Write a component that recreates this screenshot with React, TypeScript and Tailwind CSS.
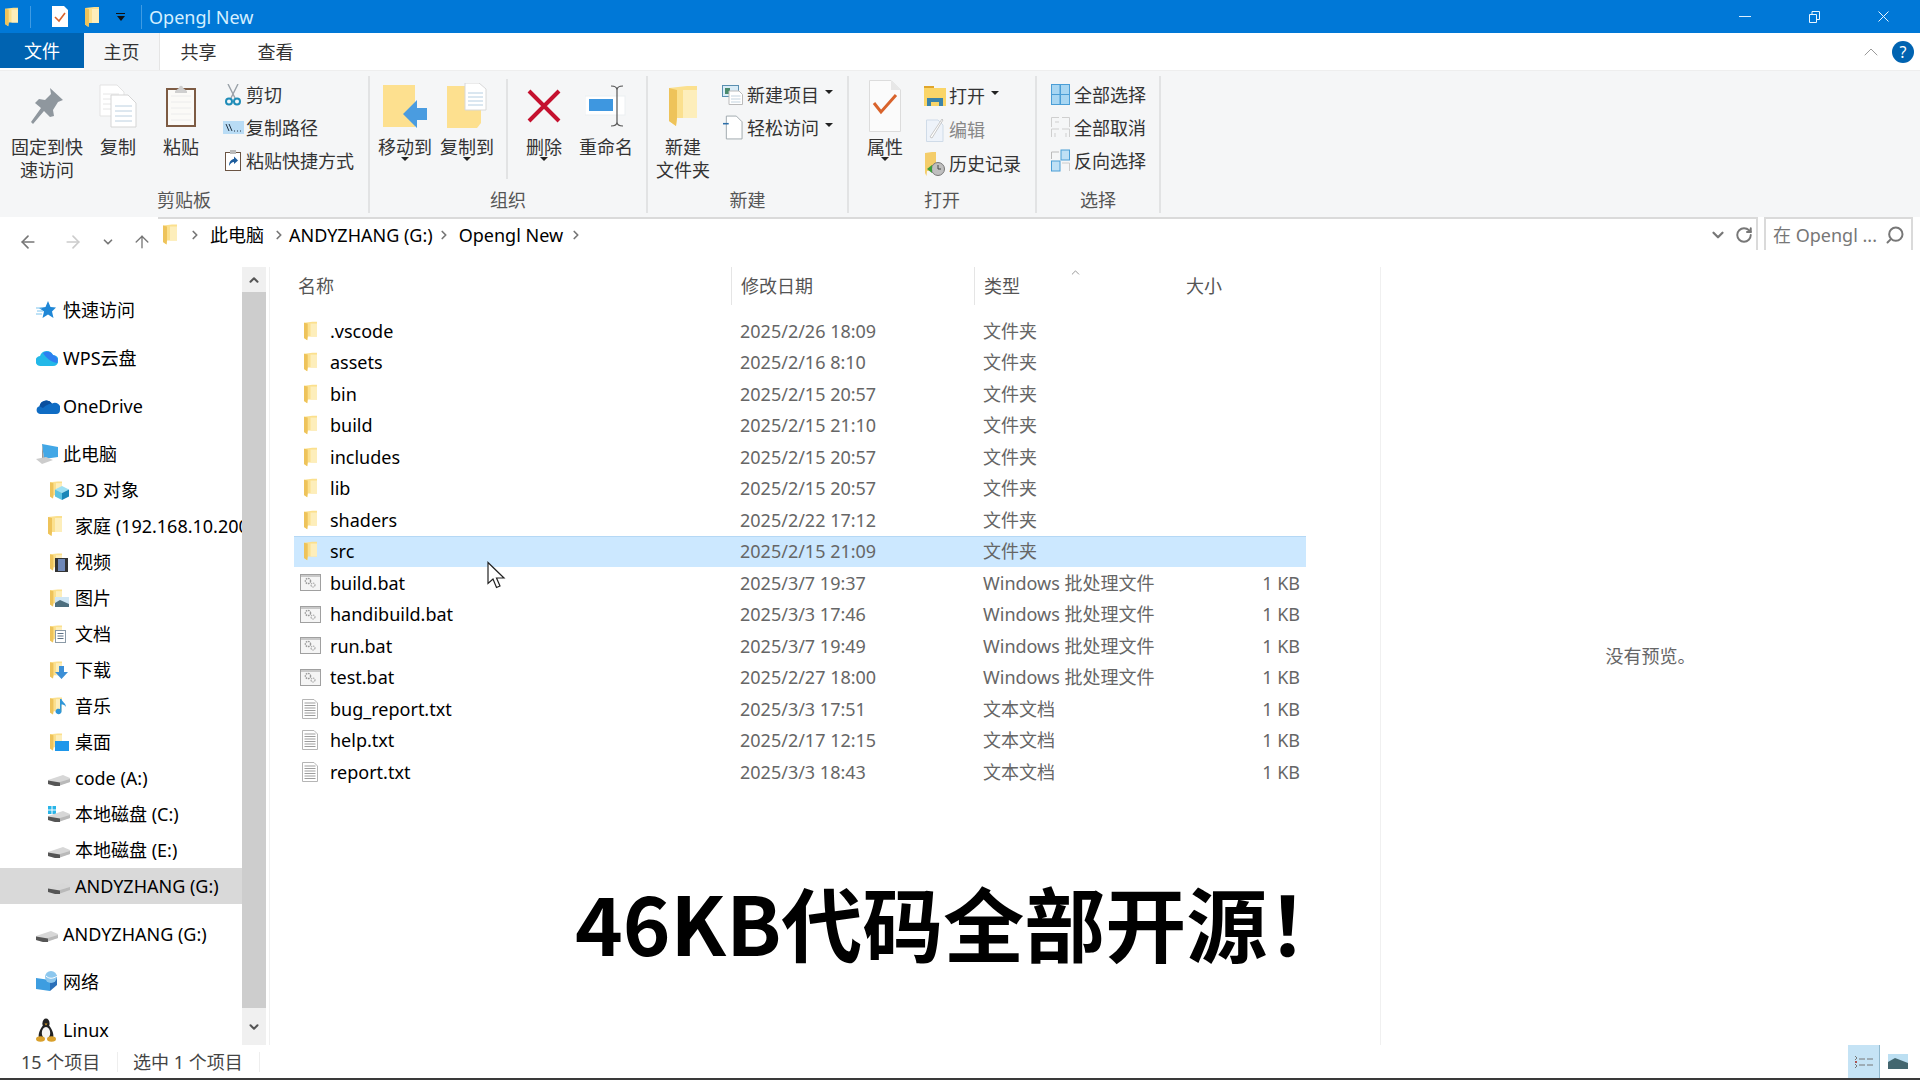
import type { ReactNode } from "react";
import { ArrowLeft, ArrowRight, ArrowUp, ChevronDown, ChevronRight, ChevronUp, RotateCw, Search } from "lucide-react";

function Folder({ className = "w-[13px] h-[20px]" }: { className?: string }) {
  return (
    <svg viewBox="0 0 14 20" className={className}>
      <path d="M0 1 L9 0 H14 V16 H4 L3.5 20 L0 17.5 Z" fill="#fbe08e" />
      <path d="M7 2 H14 V16 H7 Z" fill="#fdeebb" />
      <path d="M0 1 L4 2 V16 L3.5 20 L0 17.5 Z" fill="#eec35a" />
    </svg>
  );
}

function BatIcon() {
  return (
    <svg viewBox="0 0 21 17" className="w-[21px] h-[17px]">
      <rect x="0.5" y="0.5" width="20" height="16" fill="#f5f5f5" stroke="#a0a0a0" />
      <rect x="1" y="1" width="19" height="2" fill="#c9c9c9" />
      <circle cx="8" cy="7" r="2.6" fill="none" stroke="#999" strokeWidth="1.4" strokeDasharray="1.6 .8" />
      <circle cx="13" cy="11" r="2" fill="none" stroke="#aaa" strokeWidth="1.2" strokeDasharray="1.4 .7" />
    </svg>
  );
}

function TxtIcon() {
  return (
    <svg viewBox="0 0 16 20" className="w-[16px] h-[20px]">
      <path d="M.5.5 H12 L15.5 4 V19.5 H.5 Z" fill="#fff" stroke="#b5b5b5" />
      {[4, 6.5, 9, 11.5, 14, 16.5].map((y) => (
        <path key={y} d={`M2.5 ${y} H13.5`} stroke="#9d9d9d" />
      ))}
    </svg>
  );
}

function Drive({ win = false }: { win?: boolean }) {
  return (
    <svg viewBox="0 0 22 16" className="w-[22px] h-[16px]">
      {win && (
        <g fill="#28b4e8">
          <rect x="0" y="0" width="3.5" height="3.5" />
          <rect x="4.5" y="0" width="3.5" height="3.5" />
          <rect x="0" y="4.5" width="3.5" height="3.5" />
          <rect x="4.5" y="4.5" width="3.5" height="3.5" />
        </g>
      )}
      <path d="M0 10 L15 5 L22 8 V12 L7 16 L0 14 Z" fill="#d7d7d7" />
      <path d="M0 10.5 L12 12.5 V16 H7 L0 14 Z" fill="#555" />
      <path d="M12 12 L22 9 V12 L12 15.5 Z" fill="#b9b9b9" />
    </svg>
  );
}

function FolderWith({ children }: { children: ReactNode }) {
  return (
    <span className="relative block w-[22px] h-[20px]">
      <span className="absolute left-[2px] top-0">
        <Folder className="w-[12px] h-[20px]" />
      </span>
      <span className="absolute left-[7px] top-[6px]">{children}</span>
    </span>
  );
}

const folderOverlay = {
  cube: (
    <svg viewBox="0 0 14 14" className="w-[14px] h-[14px]">
      <path d="M7 0 L14 3.5 L7 7 L0 3.5 Z" fill="#9fe0f2" />
      <path d="M0 3.5 L7 7 V14 L0 10.5 Z" fill="#5cc3e2" />
      <path d="M14 3.5 L7 7 V14 L14 10.5 Z" fill="#1b87b8" />
    </svg>
  ),
  film: (
    <svg viewBox="0 0 13 14" className="w-[13px] h-[14px]">
      <rect width="13" height="14" fill="#333" />
      <rect x="3" y="1" width="7" height="12" fill="#6f88b8" />
    </svg>
  ),
  pic: (
    <svg viewBox="0 0 14 10" className="w-[14px] h-[10px] mt-[3px]">
      <rect width="14" height="10" fill="#cfe6f5" />
      <path d="M0 6 L5 3 L14 7 V10 H0 Z" fill="#4d6f7f" />
    </svg>
  ),
  doc: (
    <svg viewBox="0 0 11 13" className="w-[11px] h-[13px]">
      <rect x=".5" y=".5" width="10" height="12" fill="#fff" stroke="#8b9aa7" />
      <path d="M2.5 3.5 H8.5 M2.5 6 H8.5 M2.5 8.5 H8.5" stroke="#5e7286" />
    </svg>
  ),
  down: (
    <svg viewBox="0 0 13 13" className="w-[13px] h-[13px]">
      <path d="M4 0 H9 V6 H13 L6.5 13 L0 6 H4 Z" fill="#3c8fd6" />
    </svg>
  ),
  music: (
    <svg viewBox="0 0 12 16" className="w-[12px] h-[16px] -mt-[3px]">
      <path d="M5 0 H6.5 C7 3 11 4 11 8 C10 6 8 5.5 6.5 5.5 V12 A3 2.8 0 1 1 5 10 Z" fill="#2f96d8" />
    </svg>
  ),
  desk: (
    <svg viewBox="0 0 14 10" className="w-[14px] h-[10px] mt-[3px]">
      <rect width="14" height="10" fill="#1e97ea" />
    </svg>
  ),
};

function Star() {
  return (
    <svg viewBox="0 0 20 18" className="w-[20px] h-[18px]">
      <path d="M12 0 L14.5 6 L20 6.5 L16 10.5 L17.5 17 L12 13.5 L6.5 17 L8 10.5 L3 7 L9.5 6 Z" fill="#1f87d6" />
      <path d="M0 7 H6 M1 10 H7 M0 13 H6" stroke="#7cc4ee" strokeWidth="1" />
    </svg>
  );
}

function WpsCloud() {
  return (
    <svg viewBox="0 0 22 18" className="w-[22px] h-[18px]">
      <path d="M5 17 A5 5 0 0 1 4 7 A7 7 0 0 1 17 6 A5.5 5.5 0 0 1 17 17 Z" fill="#23b8e8" />
      <path d="M7 4 A7 7 0 0 1 17 6 A5.5 5.5 0 0 1 21 14 C15 13 10 9 7 4 Z" fill="#2e7ff0" />
    </svg>
  );
}

function OneDrive() {
  return (
    <svg viewBox="0 0 24 15" className="w-[24px] h-[15px]">
      <path d="M4 15 A4 4 0 0 1 3.5 7.2 A7 7 0 0 1 16 4.5 A5.5 5.5 0 0 1 24 11 A4 4 0 0 1 20 15 Z" fill="#0f6cc4" />
      <path d="M3.5 7.2 A7 7 0 0 1 16 4.5 C11 5 8 8 7 9 Z" fill="#0a4f9e" />
    </svg>
  );
}

function Pc() {
  return (
    <svg viewBox="0 0 24 20" className="w-[24px] h-[20px]">
      <path d="M6 0 L22 3 V13 L8 15 Z" fill="#42a7e6" />
      <path d="M6 0 L8 15 L6 14 Z" fill="#9a9a9a" />
      <path d="M0 15 L10 13 L17 16 L6 20 Z" fill="#ccc" />
    </svg>
  );
}

function Net() {
  return (
    <svg viewBox="0 0 22 22" className="w-[22px] h-[22px]">
      <path d="M0 7 L14 9 V20 L0 18 Z" fill="#3d9de0" />
      <path d="M14 9 L21 4 V14 L14 20 Z" fill="#2a6fb8" />
      <circle cx="15" cy="6" r="6" fill="#8cc7ee" />
      <path d="M10 5 C13 8 17 8 21 5" stroke="#fff" fill="none" />
    </svg>
  );
}

function Tux() {
  return (
    <svg viewBox="0 0 20 24" className="w-[20px] h-[24px]">
      <ellipse cx="10" cy="5.5" rx="3.6" ry="5" fill="#222" />
      <path d="M6.5 8 C3 13 2 17 3 20 H17 C18 17 17 13 13.5 8 Z" fill="#222" />
      <ellipse cx="10" cy="15" rx="4.2" ry="6" fill="#f6f6f6" />
      <path d="M8.5 5.5 H11.5 L10 7.5 Z" fill="#dda02c" />
      <ellipse cx="4.5" cy="21" rx="4.5" ry="2.8" fill="#d9a02c" />
      <ellipse cx="15.5" cy="21" rx="4.5" ry="2.8" fill="#d9a02c" />
    </svg>
  );
}

const pinIcon = (
  <svg viewBox="0 0 32 36" className="w-[32px] h-[36px]">
    <path d="M19 0 L32 12 L27 14 L22 22 L23 28 L19 29 L13 23 L2 36 L0 34 L10 20 L4 15 L8 11 L14 12 L20 6 Z" fill="#8f979e" />
  </svg>
);
const copyIcon = (
  <svg viewBox="0 0 38 44" className="w-[38px] h-[44px]">
    <path d="M1 1 H18 L25 8 V32 H1 Z" fill="#fff" stroke="#e3e3e3" />
    <path d="M4 10 H20 M4 15 H20 M4 20 H20 M4 25 H20" stroke="#e6e6e6" />
    <path d="M12 11 H29 L37 19 V43 H12 Z" fill="#fff" stroke="#d5d5d5" />
    <path d="M16 22 H33 M16 27 H33 M16 32 H33 M16 37 H33" stroke="#bcd0e0" />
  </svg>
);
const pasteIcon = (
  <svg viewBox="0 0 32 44" className="w-[32px] h-[44px]">
    <rect x="1" y="4" width="30" height="39" fill="#7d5b43" />
    <rect x="3" y="6" width="26" height="35" fill="#fbfaf7" />
    <path d="M6 12 H26 M6 18 H26 M6 24 H26 M6 30 H26 M6 36 H26" stroke="#ececec" />
    <path d="M10 7 L14 4 C14 1 18 1 18 4 L22 7 V9 H10 Z" fill="#cfcfcf" />
  </svg>
);
const cutIcon = (
  <svg viewBox="0 0 16 22" className="w-[16px] h-[22px]">
    <path d="M3 0 L10 14 M13 0 L6 14" stroke="#9aa1a8" strokeWidth="1.4" />
    <circle cx="4" cy="17.5" r="3" fill="none" stroke="#1f8cb8" strokeWidth="2" />
    <circle cx="12" cy="17.5" r="3" fill="none" stroke="#1f8cb8" strokeWidth="2" />
  </svg>
);
const pathIcon = (
  <svg viewBox="0 0 21 13" className="w-[21px] h-[13px]">
    <rect width="21" height="13" fill="#b9dcf5" />
    <path d="M3 3 L6 10 M6 3 L9 10" stroke="#234" strokeWidth="1" />
    <path d="M11 10 H12 M14 10 H15 M17 10 H18" stroke="#234" strokeWidth="1" />
  </svg>
);
const shortcutIcon = (
  <svg viewBox="0 0 16 21" className="w-[16px] h-[21px]">
    <rect x=".5" y="2.5" width="15" height="18" fill="#fff" stroke="#6b5443" />
    <rect x="5" y="0" width="6" height="4" fill="#bbb" />
    <path d="M4 16 C4 11 7 9 9 9 V6.5 L13 10.5 L9 14 V12 C7 12 5.5 13.5 4 16 Z" fill="#1d5c9c" />
  </svg>
);
const moveIcon = (
  <svg viewBox="0 0 44 44" className="w-[44px] h-[44px]">
    <rect x="0" y="1" width="32" height="42" fill="#fde08f" />
    <path d="M20 30 L34 16 V24 H44 V36 H34 V44 Z" fill="#4a9ce0" />
  </svg>
);
const copyToIcon = (
  <svg viewBox="0 0 40 46" className="w-[40px] h-[46px]">
    <path d="M0 3 H34 V40 L30 45 H0 Z" fill="#fde08f" />
    <path d="M18 0 H32 L39 6 V27 H18 Z" fill="#fff" stroke="#d8d8d8" />
    <path d="M21 10 H36 M21 14 H36 M21 18 H36 M21 22 H36" stroke="#b6cfe2" />
  </svg>
);
const deleteIcon = (
  <svg viewBox="0 0 34 34" className="w-[34px] h-[34px]">
    <path d="M2 2 L32 32 M32 2 L2 32" stroke="#c5112f" strokeWidth="4" />
  </svg>
);
const renameIcon = (
  <svg viewBox="0 0 42 42" className="w-[42px] h-[42px]">
    <rect x="0" y="11" width="40" height="19" fill="#fff" stroke="#eceff2" />
    <rect x="4" y="14" width="24" height="12" fill="#3e97e0" />
    <path d="M26 1 C30 1 32 2 32 5 V37 C32 40 30 41 26 41 M38 1 C34 1 32 2 32 5 M32 37 C32 40 34 41 38 41" stroke="#555" fill="none" strokeWidth="1.2" />
  </svg>
);
const newItemIcon = (
  <svg viewBox="0 0 21 20" className="w-[21px] h-[20px]">
    <rect x=".5" y=".5" width="16" height="11" fill="#d9ecf7" stroke="#5a8fb0" />
    <rect x="3" y="3" width="5" height="6" fill="#4a8a6c" />
    <path d="M7 6 H17 L20.5 9.5 V19.5 H7 Z" fill="#fff" stroke="#bbb" />
    <path d="M9 11 H18.5 M9 14 H18.5 M9 17 H18.5" stroke="#c3d3df" />
  </svg>
);
const easyIcon = (
  <svg viewBox="0 0 21 26" className="w-[20px] h-[25px]">
    <path d="M3.5 1 H14 L20 7 V25 H3.5 Z" fill="#fff" stroke="#9ea6ac" />
    <path d="M0 9 H6" stroke="#2b6ea8" strokeWidth="1.6" />
  </svg>
);
const newFolderIcon = <Folder className="w-[28px] h-[48px]" />;
const propsIcon = (
  <svg viewBox="0 0 32 52" className="w-[32px] h-[52px]">
    <path d="M.5 .5 H22 L31.5 10 V51.5 H.5 Z" fill="#fbfbfb" stroke="#dcdcdc" />
    <path d="M22 .5 V10 H31.5 Z" fill="#e7e7e7" />
    <path d="M5 23 L12 32 L27 15" stroke="#d9632c" strokeWidth="3" fill="none" />
  </svg>
);
const openIcon = (
  <svg viewBox="0 0 22 20" className="w-[22px] h-[20px]">
    <rect y="0" width="10" height="3" fill="#e0a52a" />
    <rect y="2" width="22" height="18" fill="#fad568" />
    <path d="M3 20 V12 H19 V20 H15 V16 H7 V20 Z" fill="#3c83a8" />
  </svg>
);
const editIcon = (
  <svg viewBox="0 0 18 24" className="w-[18px] h-[24px]">
    <path d="M.5 2 H12 L17 7 V23.5 H.5 Z" fill="#eef3fa" stroke="#cfdbe8" />
    <path d="M4 19 L16 1 L17 2 L6 20 Z" fill="#fff" stroke="#c8c8c8" />
  </svg>
);
const historyIcon = (
  <svg viewBox="0 0 20 24" className="w-[20px] h-[24px]">
    <path d="M0 1 L7 0 H11 V19 H2 L1.5 24 L0 21 Z" fill="#f4cd6a" />
    <circle cx="13" cy="17" r="6.5" fill="#bfbfbf" stroke="#777" />
    <path d="M13 13 V17 H16" stroke="#444" fill="none" />
    <path d="M2 17 L7 13 V21 Z" fill="#3d9c3a" />
  </svg>
);
const selectAllIcon = (
  <svg viewBox="0 0 19 21" className="w-[19px] h-[21px]">
    <rect width="19" height="21" fill="#4b9ed6" />
    <rect x="1" y="1" width="7.5" height="9" fill="#a8d6f2" />
    <rect x="10" y="1" width="8" height="9" fill="#a8d6f2" />
    <rect x="1" y="11" width="7.5" height="9" fill="#a8d6f2" />
    <rect x="10" y="11" width="8" height="9" fill="#a8d6f2" />
  </svg>
);
const selectNoneIcon = (
  <svg viewBox="0 0 19 21" className="w-[19px] h-[21px]" fill="none" stroke="#cfcfcf">
    <path d="M.5 10 V.5 H8 M11 .5 H18.5 V10 M.5 20 V12 H8 M11 12 H18.5 V20 M4 5 H8 M4 16 V20 M15 16 V20" />
  </svg>
);
const invertIcon = (
  <svg viewBox="0 0 19 23" className="w-[19px] h-[23px]">
    <path d="M.5 10 V3 H8" stroke="#bbb" fill="none" />
    <rect x="10" y="1" width="8.5" height="10" fill="#bfe0f5" stroke="#4b9ed6" />
    <rect x=".5" y="12" width="8.5" height="10" fill="#bfe0f5" stroke="#4b9ed6" />
    <path d="M11 14 H18.5 V22" stroke="#ccc" fill="none" />
  </svg>
);

function Caret({ className = "" }: { className?: string }) {
  return <span className={`block w-0 h-0 border-x-[4px] border-x-transparent border-t-[4px] border-t-[#222] ${className}`} />;
}

function BigButton({ w, icon, lines, menu }: { w: string; icon: ReactNode; lines: string[]; menu?: boolean }) {
  return (
    <div className={`${w} shrink-0 flex flex-col items-center`}>
      <div className="h-[60px] flex items-center justify-center">{icon}</div>
      {lines.map((l) => (
        <div key={l} className="h-[23px] leading-[23px] text-[18px] text-[#333] whitespace-nowrap">
          {l}
        </div>
      ))}
      {menu && <Caret className="-mt-[2px]" />}
    </div>
  );
}

function SmallRow({ icon, label, iconW, h = "h-[33px]", muted, menu }: { icon: ReactNode; label: string; iconW: string; h?: string; muted?: boolean; menu?: boolean }) {
  return (
    <div className={`${h} flex items-center`}>
      <div className={`${iconW} shrink-0 flex justify-center`}>{icon}</div>
      <span className={`text-[18px] whitespace-nowrap ${muted ? "text-[#888]" : "text-[#333]"}`}>{label}</span>
      {menu && <Caret className="ml-[6px] mb-[6px]" />}
    </div>
  );
}

function Group({ w, label, children }: { w: string; label: string; children: ReactNode }) {
  return (
    <div className={`${w} shrink-0 h-[137px] mt-[5px] border-r-[2px] border-[#e2e3e4] flex flex-col`}>
      <div className="h-[112px] flex">{children}</div>
      <div className="h-[25px] leading-[25px] text-center text-[18px] text-[#555]">{label}</div>
    </div>
  );
}

const navRows: { label: string; icon: ReactNode; top?: boolean; selected?: boolean }[] = [
  { label: "快速访问", icon: <Star />, top: true },
  { label: "WPS云盘", icon: <WpsCloud />, top: true },
  { label: "OneDrive", icon: <OneDrive />, top: true },
  { label: "此电脑", icon: <Pc />, top: true },
  { label: "3D 对象", icon: <FolderWith>{folderOverlay.cube}</FolderWith> },
  { label: "家庭 (192.168.10.200)", icon: <Folder className="w-[14px] h-[24px]" /> },
  { label: "视频", icon: <FolderWith>{folderOverlay.film}</FolderWith> },
  { label: "图片", icon: <FolderWith>{folderOverlay.pic}</FolderWith> },
  { label: "文档", icon: <FolderWith>{folderOverlay.doc}</FolderWith> },
  { label: "下载", icon: <FolderWith>{folderOverlay.down}</FolderWith> },
  { label: "音乐", icon: <FolderWith>{folderOverlay.music}</FolderWith> },
  { label: "桌面", icon: <FolderWith>{folderOverlay.desk}</FolderWith> },
  { label: "code (A:)", icon: <Drive /> },
  { label: "本地磁盘 (C:)", icon: <Drive win /> },
  { label: "本地磁盘 (E:)", icon: <Drive /> },
  { label: "ANDYZHANG (G:)", icon: <Drive />, selected: true },
  { label: "ANDYZHANG (G:)", icon: <Drive />, top: true },
  { label: "网络", icon: <Net />, top: true },
  { label: "Linux", icon: <Tux />, top: true },
];

const files = [
  { name: ".vscode", date: "2025/2/26 18:09", type: "文件夹", size: "", kind: "dir" },
  { name: "assets", date: "2025/2/16 8:10", type: "文件夹", size: "", kind: "dir" },
  { name: "bin", date: "2025/2/15 20:57", type: "文件夹", size: "", kind: "dir" },
  { name: "build", date: "2025/2/15 21:10", type: "文件夹", size: "", kind: "dir" },
  { name: "includes", date: "2025/2/15 20:57", type: "文件夹", size: "", kind: "dir" },
  { name: "lib", date: "2025/2/15 20:57", type: "文件夹", size: "", kind: "dir" },
  { name: "shaders", date: "2025/2/22 17:12", type: "文件夹", size: "", kind: "dir" },
  { name: "src", date: "2025/2/15 21:09", type: "文件夹", size: "", kind: "dir" },
  { name: "build.bat", date: "2025/3/7 19:37", type: "Windows 批处理文件", size: "1 KB", kind: "bat" },
  { name: "handibuild.bat", date: "2025/3/3 17:46", type: "Windows 批处理文件", size: "1 KB", kind: "bat" },
  { name: "run.bat", date: "2025/3/7 19:49", type: "Windows 批处理文件", size: "1 KB", kind: "bat" },
  { name: "test.bat", date: "2025/2/27 18:00", type: "Windows 批处理文件", size: "1 KB", kind: "bat" },
  { name: "bug_report.txt", date: "2025/3/3 17:51", type: "文本文档", size: "1 KB", kind: "txt" },
  { name: "help.txt", date: "2025/2/17 12:15", type: "文本文档", size: "1 KB", kind: "txt" },
  { name: "report.txt", date: "2025/3/3 18:43", type: "文本文档", size: "1 KB", kind: "txt" },
];

export default function App() {
  return (
    <div className="relative w-[1920px] h-[1080px] overflow-hidden bg-white flex flex-col font-['Noto_Sans','Noto_Sans_CJK_SC',sans-serif] text-[18px] leading-none text-black">
      {/* title bar */}
      <div className="h-[33px] shrink-0 bg-[#0078d7] flex items-center">
        <div className="ml-[5px] w-[14px]">
          <Folder className="w-[13px] h-[20px]" />
        </div>
        <div className="ml-[11px] w-px h-[22px] bg-[#3f9be3]" />
        <svg viewBox="0 0 16 21" className="ml-[21px] w-[16px] h-[21px]">
          <path d="M0 0 H12 L16 4 V21 H0 Z" fill="#fff" />
          <path d="M3 11 L7 15 L13 7" stroke="#d9632c" strokeWidth="1.6" fill="none" />
        </svg>
        <div className="ml-[17px]">
          <Folder className="w-[14px] h-[22px]" />
        </div>
        <div className="ml-[17px] flex flex-col items-center gap-[2px]">
          <span className="block w-[9px] h-px bg-[#111]" />
          <span className="block w-0 h-0 border-x-[4px] border-x-transparent border-t-[5px] border-t-[#111]" />
        </div>
        <div className="ml-[16px] w-px h-[24px] bg-[#3f9be3]" />
        <span className="ml-[7px] text-[18px] text-[#d4efff]">Opengl New</span>
        <div className="ml-auto flex items-center">
          <span className="w-[12px] h-px bg-[#dcefff] mr-[58px]" />
          <svg viewBox="0 0 11 12" fill="none" stroke="#eaf6ff" className="w-[11px] h-[12px] mr-[58px]">
            <path d="M.5 3.5 H7.5 V11.5 H.5 Z M3 3 V.5 H10.5 V8.5 H8" />
          </svg>
          <svg viewBox="0 0 11 11" stroke="#eaf6ff" className="w-[11px] h-[11px] mr-[31px]">
            <path d="M.5 .5 L10.5 10.5 M10.5 .5 L.5 10.5" />
          </svg>
        </div>
      </div>

      {/* tabs */}
      <div className="h-[37px] shrink-0 flex items-start relative">
        <div className="w-[84px] h-[35px] bg-[#0063b1] text-white flex items-center justify-center">文件</div>
        <div className="w-[76px] h-[37px] bg-[#f5f6f7] border-r border-[#e5e5e5] text-[#333] flex items-center justify-center">主页</div>
        <div className="w-[77px] h-[37px] text-[#333] flex items-center justify-center">共享</div>
        <div className="w-[77px] h-[37px] text-[#333] flex items-center justify-center">查看</div>
        <div className="ml-auto flex items-center h-[37px]">
          <ChevronUp className="w-[24px] h-[24px] text-[#9a9a9a]" strokeWidth={1} />
          <div className="ml-[9px] mr-[6px] w-[22px] h-[22px] rounded-full bg-[#0063b1] text-white flex items-center justify-center text-[16px]">?</div>
        </div>
      </div>

      {/* ribbon */}
      <div className="h-[147px] shrink-0 bg-[#f5f6f7] flex border-t border-[#eee]">
        <Group w="w-[370px]" label="剪贴板">
          <BigButton w="w-[94px]" icon={pinIcon} lines={["固定到快", "速访问"]} />
          <BigButton w="w-[48px]" icon={copyIcon} lines={["复制"]} />
          <BigButton w="w-[78px]" icon={pasteIcon} lines={["粘贴"]} />
          <div className="flex flex-col pt-[2px]">
            <SmallRow icon={cutIcon} label="剪切" iconW="w-[26px]" />
            <SmallRow icon={pathIcon} label="复制路径" iconW="w-[26px]" />
            <SmallRow icon={shortcutIcon} label="粘贴快捷方式" iconW="w-[26px]" />
          </div>
        </Group>
        <Group w="w-[278px]" label="组织">
          <BigButton w="w-[70px]" icon={moveIcon} lines={["移动到"]} menu />
          <BigButton w="w-[54px]" icon={copyToIcon} lines={["复制到"]} menu />
          <div className="ml-[12px] w-[2px] h-[100px] mt-[3px] bg-[#e2e3e4]" />
          <BigButton w="w-[72px]" icon={deleteIcon} lines={["删除"]} menu />
          <BigButton w="w-[52px]" icon={renameIcon} lines={["重命名"]} />
        </Group>
        <Group w="w-[201px]" label="新建">
          <BigButton w="w-[70px]" icon={newFolderIcon} lines={["新建", "文件夹"]} />
          <div className="flex flex-col pt-[2px]">
            <SmallRow icon={newItemIcon} label="新建项目" iconW="w-[29px]" menu />
            <SmallRow icon={easyIcon} label="轻松访问" iconW="w-[29px]" menu />
          </div>
        </Group>
        <Group w="w-[188px]" label="打开">
          <BigButton w="w-[72px]" icon={propsIcon} lines={["属性"]} menu />
          <div className="flex flex-col pt-[2px]">
            <SmallRow icon={openIcon} label="打开" iconW="w-[28px]" h="h-[35px]" menu />
            <SmallRow icon={editIcon} label="编辑" iconW="w-[28px]" h="h-[34px]" muted />
            <SmallRow icon={historyIcon} label="历史记录" iconW="w-[28px]" h="h-[34px]" />
          </div>
        </Group>
        <Group w="w-[124px]" label="选择">
          <div className="flex flex-col pt-[2px] pl-[10px]">
            <SmallRow icon={selectAllIcon} label="全部选择" iconW="w-[27px]" />
            <SmallRow icon={selectNoneIcon} label="全部取消" iconW="w-[27px]" />
            <SmallRow icon={invertIcon} label="反向选择" iconW="w-[27px]" />
          </div>
        </Group>
      </div>

      {/* address row */}
      <div className="h-[50px] shrink-0 flex items-center">
        <div className="w-[158px] flex items-center shrink-0">
          <ArrowLeft className="ml-[18px] w-[20px] h-[20px] text-[#777]" strokeWidth={2} />
          <ArrowRight className="ml-[25px] w-[20px] h-[20px] text-[#ccc]" strokeWidth={2} />
          <ChevronDown className="ml-[18px] w-[14px] h-[14px] text-[#777]" strokeWidth={3} />
          <ArrowUp className="ml-[17px] w-[20px] h-[20px] text-[#777]" strokeWidth={1.6} />
        </div>
        <div className="w-[1600px] h-[33px] -mt-[17px] border-t-2 border-r-2 border-[#dadada] flex items-center">
          <span className="ml-[5px]">
            <Folder className="w-[14px] h-[21px]" />
          </span>
          <ChevronRight className="ml-[11px] w-[14px] h-[14px] text-[#777]" strokeWidth={3} />
          <span className="ml-[8px] text-black">此电脑</span>
          <ChevronRight className="ml-[8px] w-[14px] h-[14px] text-[#777]" strokeWidth={3} />
          <span className="ml-[3px] text-black">ANDYZHANG (G:)</span>
          <ChevronRight className="ml-[4px] w-[14px] h-[14px] text-[#777]" strokeWidth={3} />
          <span className="ml-[8px] text-black">Opengl New</span>
          <ChevronRight className="ml-[6px] w-[14px] h-[14px] text-[#777]" strokeWidth={3} />
          <ChevronDown className="ml-auto w-[18px] h-[18px] text-[#777]" strokeWidth={3} />
          <RotateCw className="ml-[8px] mr-[3px] w-[18px] h-[18px] text-[#777]" strokeWidth={2.6} />
        </div>
        <div className="ml-[6px] w-[149px] h-[33px] -mt-[17px] border-t-2 border-x-2 border-[#dadada] flex items-center">
          <span className="ml-[7px] text-[#777]">在 Opengl ...</span>
          <Search className="ml-auto mr-[6px] w-[20px] h-[20px] text-[#777] -scale-x-100" strokeWidth={2.4} />
        </div>
      </div>

      {/* main */}
      <div className="h-[778px] shrink-0 flex">
        <nav className="w-[242px] shrink-0 pt-[25px] overflow-hidden">
          {navRows.map((r, i) => (
            <div
              key={i}
              className={`h-[36px] flex items-center whitespace-nowrap ${r.top ? "pl-[36px] mt-[12px] first:mt-0" : "pl-[48px]"} ${r.selected ? "bg-[#d9d9d9]" : ""}`}
            >
              <span className={`${r.top ? "w-[27px]" : "w-[27px]"} shrink-0 flex`}>{r.icon}</span>
              <span className="text-black">{r.label}</span>
            </div>
          ))}
        </nav>
        <div className="w-[24px] shrink-0 bg-[#cdcdcd] flex flex-col justify-between">
          <div className="h-[25px] bg-[#f0f0f0] flex items-center justify-center">
            <ChevronUp className="w-[14px] h-[14px] text-[#555]" strokeWidth={3.5} />
          </div>
          <div className="h-[37px] bg-[#f0f0f0] flex items-center justify-center">
            <ChevronDown className="w-[14px] h-[14px] text-[#555]" strokeWidth={3.5} />
          </div>
        </div>
        <div className="w-[4px] shrink-0 border-r border-[#f0f0f0]" />

        <section className="w-[1110px] shrink-0 pl-[24px]">
          <div className="h-[48px] w-[1012px] grid grid-cols-[437px_243px_203px_129px] text-[#555]">
            <div className="h-[38px] pl-[4px] flex items-center">名称</div>
            <div className="h-[38px] pl-[9px] border-l border-[#e5e5e5] flex items-center">修改日期</div>
            <div className="relative h-[38px] pl-[9px] border-l border-[#e5e5e5] flex items-center">
              类型
              <ChevronUp className="absolute left-[94px] -top-[1px] w-[13px] h-[13px] text-[#888]" strokeWidth={1.6} />
            </div>
            <div className="h-[38px] pl-[9px] flex items-center">大小</div>
          </div>
          {files.map((f) => (
            <div
              key={f.name}
              className={`h-[31.5px] w-[1012px] grid grid-cols-[446px_243px_203px_114px] items-center ${f.name === "src" ? "bg-[#cce8ff] shadow-[inset_0_1px_0_#b5d8f5]" : ""}`}
            >
              <div className="flex items-center">
                <span className="w-[36px] shrink-0 flex justify-center pr-[4px]">
                  {f.kind === "dir" ? <Folder /> : f.kind === "bat" ? <BatIcon /> : <TxtIcon />}
                </span>
                <span>{f.name}</span>
              </div>
              <span className="text-[#666]">{f.date}</span>
              <span className="text-[#666] whitespace-nowrap">{f.type}</span>
              <span className="text-[#666] text-right">{f.size}</span>
            </div>
          ))}
        </section>

        <aside className="flex-1 border-l border-[#f0f0f0] flex items-center justify-center text-[#666]">没有预览。</aside>
      </div>

      {/* status bar */}
      <div className="h-[33px] shrink-0 flex items-center text-[#444]">
        <span className="ml-[21px] w-[96px]">15 个项目</span>
        <span className="w-px h-[20px] bg-[#eee]" />
        <span className="ml-[15px] w-[126px]">选中 1 个项目</span>
        <span className="w-px h-[20px] bg-[#eee]" />
        <div className="ml-auto flex items-center h-full">
          <div className="w-[32px] h-full bg-[#c5e3f5] border-r border-[#8fb7cc] flex items-center justify-center">
            <svg viewBox="0 0 20 16" className="w-[20px] h-[16px]">
              <path d="M1 2 L3 4 L1 6 M1 10 L3 12 L1 14" stroke="#777" fill="none" />
              <rect x="1" y="7" width="2" height="2" fill="#a55" />
              <path d="M5 5 H11 M13 5 H19 M5 11 H11 M13 11 H19" stroke="#777" />
            </svg>
          </div>
          <svg viewBox="0 0 20 15" className="ml-[8px] mr-[12px] w-[20px] h-[15px]">
            <rect width="20" height="15" fill="#bcdff2" />
            <path d="M0 8 L7 4 L20 9 V15 H0 Z" fill="#43666f" />
          </svg>
        </div>
      </div>
      <div className="h-[2px] shrink-0 bg-[#3a3a3a]" />

      {/* caption over the window */}
      <div className="absolute left-[575px] top-[872px] text-[81px] leading-[98px] font-bold font-['Noto_Sans_CJK_SC',sans-serif] text-black whitespace-nowrap">
        46KB代码全部开源！
      </div>

      {/* mouse pointer */}
      <svg viewBox="0 0 20 28" className="absolute left-[487px] top-[561px] w-[20px] h-[29px]">
        <path d="M1 1 V22 L6 17.5 L9.5 26 L13 24.5 L9.5 16.5 L17 16.5 Z" fill="#fff" stroke="#222" strokeWidth="1.2" />
      </svg>
    </div>
  );
}
